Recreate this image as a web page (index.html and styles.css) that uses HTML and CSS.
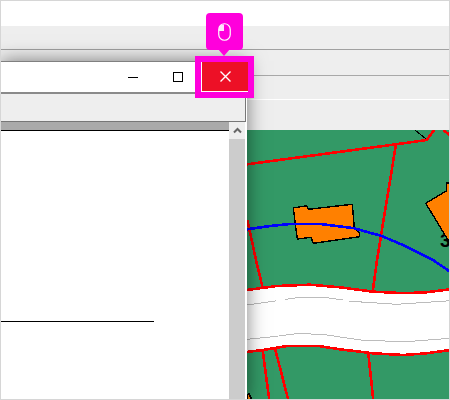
FILE: index.html
```html
<!DOCTYPE html>
<html lang="en">
<head>
    <meta charset="UTF-8">
    <title>Close window</title>
    <link rel="stylesheet" href="styles.css">
</head>
<body>
    <div class="screen">
        <!-- app behind the window -->
        <div class="top-space"></div>
        <div class="band band-1"></div>
        <div class="band band-2"></div>
        <div class="band band-3"></div>
        <div class="band band-4"></div>

        <svg class="map" viewBox="1 130 448 269" width="448" height="269">
            <rect class="ground" x="1" y="130" width="448" height="269"/>
            <path class="road" d="M247 290 L276.7 286 L310 284.7 L340 287.3 L373.3 291.7 L400 293 L423 292.7 L450 289.3 L450 350 L426.7 353.3 L403 355 L373.3 353.3 L340 349.3 L318.3 346 L286.7 346 L263 350 L247 352 Z"/>
            <path class="edge" d="M247 305 L276 300.8"/>
            <path class="edge" d="M285 299.4 L296.7 297.7 L326.7 297.7 L343 300"/>
            <path class="edge" d="M349 301 L356.7 301.7 L396.7 304.3 L450 300.7"/>
            <path class="edge" d="M247 339.3 L273 336.7 L300 333.3 L326.7 335 L363 340.3 L406.7 341.7 L450 338.3"/>

            <path class="parcel" d="M247 164.3 L396 144.3 L426.7 140 L434 130"/>
            <path class="parcel" d="M443 130 L450 135"/>
            <path class="parcel" d="M396 144.3 L377 260 L372.7 291.7"/>
            <path class="parcel" d="M247.3 220 L256 260 L262.7 288"/>
            <path class="parcel" d="M247 290 L276.7 286 L310 284.7 L340 287.3 L373.3 291.7 L400 293 L423 292.7 L450 289.3"/>
            <path class="parcel" d="M247 352 L263 350 L286.7 346 L318.3 346 L340 349.3 L373.3 353.3 L403 355 L426.7 353.3 L450 350"/>
            <path class="parcel" d="M262.7 350.7 L269.3 400"/>
            <path class="parcel" d="M275 348.3 L288.3 400"/>
            <path class="parcel" d="M368.3 353.3 L373.3 400"/>
            <path class="thin" d="M415 130 L426 139"/>

            <text class="house-no" x="440" y="247">3</text>
            <path class="house" d="M293.3 208 L306.7 205.7 L308.3 209.3 L352.3 204.3 L354.3 228.3 L359.3 232.7 L359.3 236.7 L313.3 243.3 L311 237.3 L297.3 239 Z"/>
            <path class="house" d="M425.7 203.3 L446.7 190.7 L446.7 183 L452 183 L452 242 L448 240 Z"/>
            <path class="house" d="M247 395 L249 394 L252 400 L247 400 Z"/>
            <path class="pipe" d="M247 229.3 L270 226 L290 224 L320 224 L353 228 L381.7 236 L406.7 246.7 L433 260 L450 271.7"/>
        </svg>

        <!-- window on top -->
        <div class="window">
            <div class="titlebar">
                <svg class="win-icon" viewBox="0 0 12 12" width="12" height="12"><path class="win-stroke" d="M1 6.5 H11"/></svg>
                <svg class="win-icon" viewBox="0 0 10 10" width="10" height="10"><rect class="win-stroke" x="0.5" y="0.5" width="9" height="9"/></svg>
            </div>
            <div class="toolbar"></div>
            <div class="win-body">
                <div class="content">
                    <div class="header-strip"></div>
                    <div class="page">
                        <div class="rule"></div>
                    </div>
                </div>
                <div class="scrollbar">
                    <div class="scroll-up">
                        <svg viewBox="0 0 9 7" width="9" height="7"><path class="chevron" d="M1 5.5 L4.5 2 L8 5.5"/></svg>
                    </div>
                </div>
            </div>
        </div>

        <!-- highlight on the close button -->
        <div class="highlight">
            <div class="close-btn">
                <svg viewBox="0 0 11 11" width="11" height="11"><path class="close-x" d="M0.5 0.5 L10.5 10.5 M10.5 0.5 L0.5 10.5"/></svg>
            </div>
        </div>
        <div class="callout">
            <svg viewBox="0 0 13 18" width="13" height="18">
                <path class="mouse-fill" d="M6 1.5 V8 H1 V6 C1 3.5 3 1.5 6 1.5 Z"/>
                <rect class="mouse-line" x="0.75" y="0.75" width="11.5" height="16.5" rx="5.7"/>
            </svg>
        </div>
    </div>
</body>
</html>
```

FILE: styles.css
```css
* {
    box-sizing: border-box;
}
body {
    margin: 0;
    background: #fff;
}
.screen {
    position: relative;
    width: 450px;
    height: 400px;
    border: 1px solid #d6d6d6;
    overflow: hidden;
    display: flex;
    flex-direction: column;
    background: #eee;
}
.top-space {
    height: 25px;
    background: #fff;
}
.band {
    background: #eeeeee;
}
.band-1 {
    height: 24px;
    border-bottom: 1px solid #a0a0a0;
}
.band-2 {
    height: 26px;
    border-bottom: 1px solid #a8a8a8;
}
.band-3 {
    height: 24px;
    border-bottom: 1px solid #fff;
}
.band-4 {
    height: 30px;
}
.map {
    display: block;
    flex: none;
}
.ground {
    fill: #339966;
}
.road {
    fill: #fff;
}
.edge {
    fill: none;
    stroke: #bcbcbc;
    stroke-width: 1;
    shape-rendering: crispEdges;
}
.parcel {
    fill: none;
    stroke: #ff0000;
    stroke-width: 2.6;
    shape-rendering: crispEdges;
}
.thin {
    fill: none;
    stroke: #000;
    stroke-width: 1;
    shape-rendering: crispEdges;
}
.pipe {
    fill: none;
    stroke: #0000ff;
    stroke-width: 2.6;
    shape-rendering: crispEdges;
}
.house {
    fill: #ff8000;
    stroke: #000;
    stroke-width: 1.4;
    shape-rendering: crispEdges;
}
.house-no {
    font-family: "Liberation Sans", Arial, sans-serif;
    font-size: 19px;
    font-weight: bold;
    fill: #000;
}

.window {
    position: absolute;
    left: 0;
    top: 60px;
    width: 246px;
    height: 340px;
    display: flex;
    flex-direction: column;
    background: #fff;
    border-top: 1px solid #808080;
    box-shadow: 0 0 18px rgba(0, 0, 0, 0.5);
}
.titlebar {
    height: 32px;
    flex: none;
    background: #fff;
    border-bottom: 2px solid #8a8a8a;
    display: flex;
    align-items: center;
    justify-content: flex-end;
    gap: 34px;
    padding-right: 64px;
    padding-bottom: 1px;
}
.win-icon {
    display: block;
}
.win-stroke {
    fill: none;
    stroke: #000;
    stroke-width: 1;
    shape-rendering: crispEdges;
}
.toolbar {
    height: 28px;
    flex: none;
    background: #eee;
    border-bottom: 1px solid #777;
    border-right: 1px solid #777;
    margin-right: 1px;
}
.win-body {
    flex: 1;
    display: flex;
    min-height: 0;
}
.content {
    flex: 1;
    display: flex;
    flex-direction: column;
}
.header-strip {
    height: 8px;
    background: #aaa;
}
.page {
    flex: 1;
    background: #fff;
    border-top: 1px solid #000;
    padding-top: 190px;
}
.rule {
    width: 153px;
    height: 1px;
    background: #000;
}
.scrollbar {
    width: 16px;
    margin-right: 2px;
    background: #ccc;
}
.scroll-up {
    height: 17px;
    background: #eee;
    display: flex;
    align-items: center;
    justify-content: center;
}
.chevron {
    fill: none;
    stroke: #666;
    stroke-width: 2;
}

.highlight {
    position: absolute;
    left: 194px;
    top: 55px;
    width: 59px;
    height: 42px;
    border: 6px solid #ff00dc;
}
.close-btn {
    height: 100%;
    background: #ed1026;
    border-left: 1px solid #fff;
    border-bottom: 1px solid #fff;
    display: flex;
    align-items: center;
    justify-content: center;
}
.close-x {
    fill: none;
    stroke: #fff;
    stroke-width: 1.4;
}
.callout {
    position: absolute;
    left: 205px;
    top: 12px;
    width: 37px;
    height: 37px;
    border-radius: 4px;
    background: #ff00dc;
    display: flex;
    align-items: center;
    justify-content: center;
}
.callout::after {
    content: "";
    position: absolute;
    left: 12px;
    top: 36px;
    border-left: 6px solid transparent;
    border-right: 6px solid transparent;
    border-top: 7px solid #ff00dc;
}
.mouse-line {
    fill: none;
    stroke: #fff;
    stroke-width: 1.2;
}
.mouse-fill {
    fill: #fff;
    opacity: 0.9;
}
```
